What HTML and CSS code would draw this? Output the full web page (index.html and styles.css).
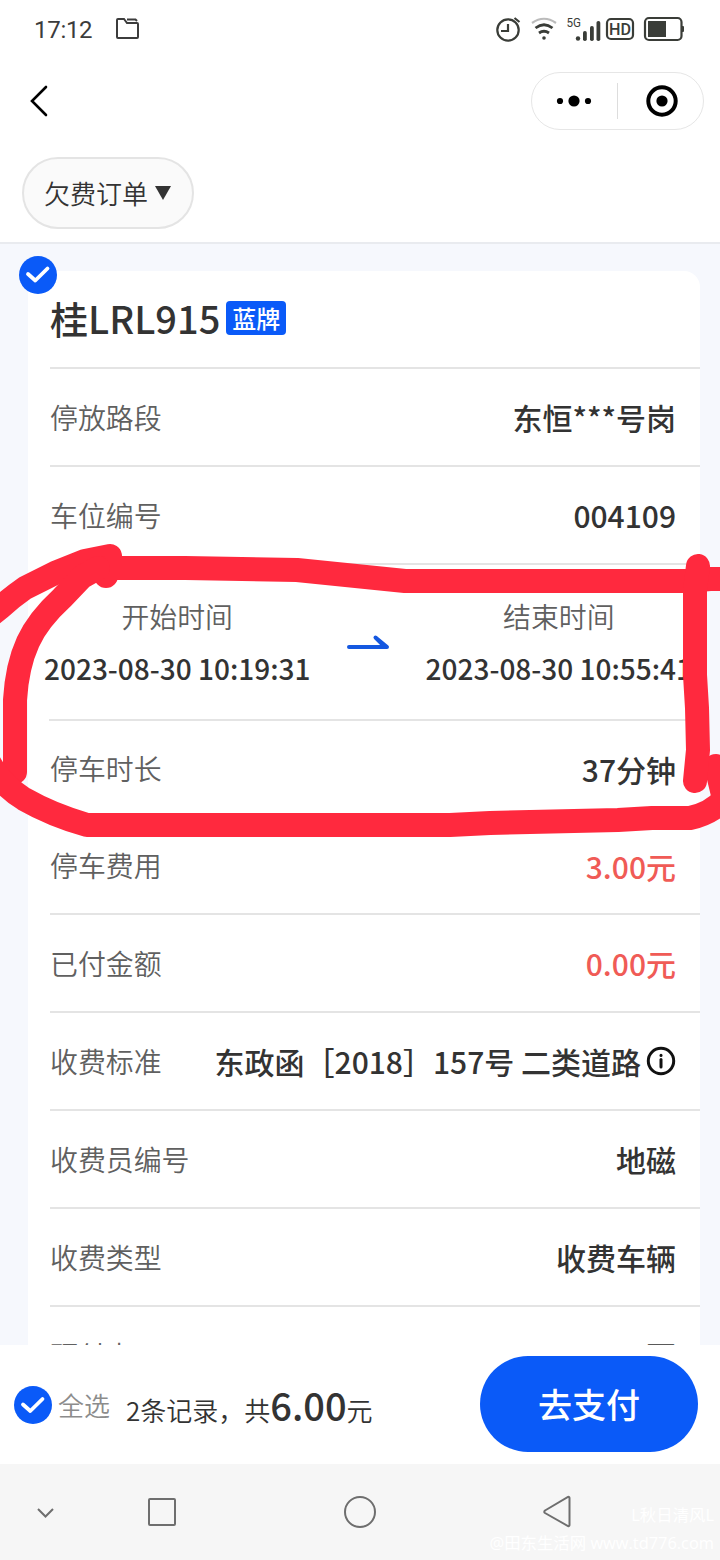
FILE: index.html
```html
<!DOCTYPE html>
<html lang="zh-CN">

<head>
    <meta charset="UTF-8">
    <meta name="viewport" content="width=device-width, initial-scale=1.0">
    <title>欠费订单</title>
    <link rel="stylesheet" href="styles.css">
</head>

<body>
    <div class="screen">
        <div class="status-bar">
            <span class="clock">17:12</span>
            <svg class="folder" width="26" height="24" viewBox="0 0 26 24">
                <path d="M2 20V3Q2 2 3 2H9L12 6H22Q23 6 23 7V20Q23 21 22 21H3Q2 21 2 20ZM12 2.500H20.500L22 4" />
            </svg>
            <svg class="status-icons" width="190" height="34" viewBox="495 12 190 34">
                <g fill="none" stroke="#3a3d38" stroke-width="2.200">
                    <circle cx="508" cy="30" r="10.700" />
                    <path d="M508 24V31H501M514.500 18L519.500 22" />
                    <path d="M532 23Q544 14.500 556 23" stroke="#bbb" />
                    <path d="M535.500 28Q544 21.500 552.500 28M539 33Q544 29.500 549 33" stroke-width="2.800" />
                    <rect x="607" y="19" width="26" height="20" rx="4" />
                    <rect x="645" y="18" width="36.500" height="22" rx="4" />
                </g>
                <g fill="#3a3d38">
                    <circle cx="544" cy="38" r="1.800" />
                    <circle cx="578" cy="38.500" r="2.200" />
                    <rect x="583" y="31" width="3.800" height="10" rx="1.800" />
                    <rect x="590" y="26" width="3.800" height="15" rx="1.800" />
                    <rect x="596.500" y="21" width="3.800" height="20" rx="1.800" />
                    <rect x="648" y="21" width="18" height="16" />
                    <rect x="681" y="26" width="3" height="6" rx="1" />
                    <text x="566.500" y="27" font-size="13" textLength="14.500" lengthAdjust="spacingAndGlyphs">5G</text>
                    <text x="609" y="35" font-size="17" font-weight="500" textLength="22" lengthAdjust="spacingAndGlyphs">HD</text>
                </g>
            </svg>
        </div>

        <div class="nav-bar">
            <svg width="20" height="32" viewBox="0 0 20 32">
                <path d="M17 2L3 16L17 30" />
            </svg>
            <div class="capsule">
                <svg width="36" height="14" viewBox="0 0 36 14">
                    <circle cx="4" cy="7" r="3.100" />
                    <circle cx="18" cy="7" r="5.600" />
                    <circle cx="32" cy="7" r="3.100" />
                </svg>
                <span class="divider"></span>
                <svg width="34" height="34" viewBox="0 0 34 34">
                    <circle cx="17" cy="17" r="13.700" fill="none" stroke="#000" stroke-width="4" />
                    <circle cx="17" cy="17" r="5.600" />
                </svg>
            </div>
        </div>

        <div class="filter-bar">
            <div class="filter"><span>欠费订单</span><span class="caret"></span></div>
        </div>

        <div class="content">
            <div class="card">
                <svg class="check card-check" viewBox="0 0 38 38">
                    <circle cx="19" cy="19" r="19" />
                    <path d="M9 18L16.300 24.500L28.500 12.500" />
                </svg>
                <div class="plate">
                    <span class="plate-no">桂LRL915</span><span class="tag">蓝牌</span>
                </div>
                <div class="row"><span class="label">停放路段</span><span class="value">东恒***号岗</span></div>
                <div class="row"><span class="label">车位编号</span><span class="value">004109</span></div>
                <div class="times">
                    <div class="time">
                        <span class="label">开始时间</span>
                        <span class="date">2023-08-30 10:19:31</span>
                    </div>
                    <svg class="arrow" width="44" height="16" viewBox="0 0 44 16">
                        <path d="M3 13H41L29.500 3.500L38 12" />
                    </svg>
                    <div class="time">
                        <span class="label">结束时间</span>
                        <span class="date">2023-08-30 10:55:41</span>
                    </div>
                </div>
                <div class="row short"><span class="label">停车时长</span><span class="value">37分钟</span></div>
                <div class="row short"><span class="label">停车费用</span><span class="value money">3.00元</span></div>
                <div class="row"><span class="label">已付金额</span><span class="value money">0.00元</span></div>
                <div class="row">
                    <span class="label">收费标准</span>
                    <span class="value standard">东政函［2018］157号 二类道路<svg class="info" width="30" height="30" viewBox="0 0 30 30">
                            <circle cx="15" cy="15" r="12.700" />
                            <path d="M15 13.500V21" />
                            <path d="M15 9.300V9.400" />
                        </svg></span>
                </div>
                <div class="row"><span class="label">收费员编号</span><span class="value">地磁</span></div>
                <div class="row"><span class="label">收费类型</span><span class="value">收费车辆</span></div>
                <div class="row"><span class="label">预付卡</span><span class="value">否</span></div>
            </div>
        </div>

        <div class="pay-bar">
            <svg class="check" viewBox="0 0 38 38">
                <circle cx="19" cy="19" r="19" />
                <path d="M9 18.500L16.300 25L28.500 13" />
            </svg>
            <span class="all">全选</span>
            <span class="total">2条记录，共<b>6.00</b>元</span>
            <button class="pay">去支付</button>
        </div>

        <div class="system-bar">
            <svg width="720" height="96" viewBox="0 0 720 96">
                <path d="M38 45L45.500 52.500L53 45" />
                <rect x="149" y="35" width="26" height="26" rx="1" />
                <circle cx="360" cy="48" r="15" />
                <path d="M545 46.500L568 33Q569.500 32.500 569.500 34V61Q569.500 62.500 568 62L545 49Q543.500 48 545 46.500Z" />
            </svg>
            <div class="watermark">
                <span class="author">L秋日清风L</span>
                <span>@田东生活网 www.td776.com</span>
            </div>
        </div>

        <!-- red marker drawn over the times -->
        <svg class="marker" width="720" height="320" viewBox="0 530 720 320">
            <path d="M-10 616L0 608Q12 597 25 588L55 573L85 561L110 556" />
            <path d="M106 576V568H185L297 570L405 581H688L710 579H730" />
            <path d="M98 568L82 577L62 598Q38 620 28 642Q17 666 15 700V772" />
            <path d="M-10 764Q2 785 24 799Q52 815 87 825H450L490 823L618 820L652 818H690Q712 813 724 799L716 766" />
            <path d="M698 566L695 590V675L697 708L698 750L695 781" />
        </svg>
    </div>
</body>

</html>
```
FILE: styles.css
```css
body {
    margin: 0;
    font-family: "Noto Sans CJK SC", sans-serif;
    color: #333;
    background-color: #fff;
}

.screen {
    position: relative;
    width: 720px;
    height: 1560px;
    overflow: hidden;
    display: flex;
    flex-direction: column;
}

.status-bar {
    height: 58px;
    flex: none;
    display: flex;
    align-items: center;
    padding: 0 35px 0 34px;
    box-sizing: border-box;
    font-family: Roboto, sans-serif;
}

.clock {
    font-size: 24px;
    letter-spacing: -0.3px;
    width: 81px;
    padding-top: 2px;
    color: #3c3c3c;
    white-space: nowrap;
}

.folder {
    fill: none;
    stroke: #3c3c3c;
    stroke-width: 2;
}

.status-icons {
    margin-left: auto;
}

.nav-bar {
    height: 86px;
    flex: none;
    display: flex;
    align-items: center;
    justify-content: space-between;
    padding: 0 16px 0 29px;
}

.nav-bar > svg {
    fill: none;
    stroke: #000;
    stroke-width: 2.6;
    stroke-linecap: round;
}

.capsule {
    width: 173px;
    height: 58px;
    box-sizing: border-box;
    border: 1px solid #e6e6e6;
    border-radius: 29px;
    display: flex;
    align-items: center;
    padding: 0 23px 0 24px;
}

.divider {
    width: 1px;
    height: 36px;
    background-color: #ddd;
    margin: 0 27px 0 25px;
}

.filter-bar {
    height: 98px;
    flex: none;
    box-sizing: border-box;
    padding: 13px 22px 0;
}

.filter {
    width: 172px;
    height: 72px;
    box-sizing: border-box;
    border: 2px solid #e4e4e4;
    border-radius: 36px;
    background-color: #fafafa;
    display: flex;
    align-items: center;
    justify-content: center;
    font-size: 26px;
    font-weight: 350;
}

.filter span:first-child {
    padding-bottom: 2px;
}

.caret {
    border: 8px solid transparent;
    border-top: 14px solid #333;
    border-bottom: 0;
    margin-left: 7px;
    margin-right: 1px;
}

.content {
    height: 1103px;
    flex: none;
    box-sizing: border-box;
    padding: 27px 20px 0 28px;
    background-color: #f6f8fd;
    border-top: 2px solid #e9ebef;
    overflow: hidden;
}

.card {
    position: relative;
    height: 1100px;
    padding-left: 22px;
    background-color: #fff;
    border-radius: 16px;
}

.check {
    width: 38px;
    height: 38px;
    flex: none;
    fill: #0a5af8;
}

.check path {
    fill: none;
    stroke: #fff;
    stroke-width: 3.8;
    stroke-linecap: round;
    stroke-linejoin: round;
}

.card-check {
    position: absolute;
    left: -9px;
    top: -15px;
}

.plate {
    height: 98px;
    box-sizing: border-box;
    padding-bottom: 2px;
    border-bottom: 2px solid #e4e4e4;
    display: flex;
    align-items: center;
}

.plate-no {
    font-size: 38px;
    font-weight: 500;
    padding-bottom: 1px;
}

.tag {
    width: 60px;
    height: 34px;
    line-height: 33px;
    margin-left: 6px;
    border-radius: 4px;
    background-color: #0a5af8;
    color: #fff;
    text-align: center;
    font-size: 24px;
    font-weight: 500;
}

.row {
    height: 98px;
    box-sizing: border-box;
    border-bottom: 2px solid #e4e4e4;
    display: flex;
    align-items: center;
    justify-content: space-between;
    padding-right: 24px;
    white-space: nowrap;
}

.short {
    height: 97px;
}

.label {
    font-size: 27.9px;
    font-weight: 350;
    color: #606060;
}

.row .label {
    padding-bottom: 1px;
}

.value {
    font-size: 30px;
    font-weight: 500;
}

.money {
    color: #f05b56;
}

.standard {
    display: flex;
    align-items: center;
}

.info {
    margin: 0 0 0 5px;
    fill: none;
    stroke: #111;
    stroke-width: 3;
    stroke-linecap: round;
}

.times {
    height: 156px;
    box-sizing: border-box;
    border-bottom: 2px solid #e4e4e4;
    display: flex;
    justify-content: space-between;
    padding-top: 30px;
    margin-left: -6px;
    padding-right: 8px;
    border-image: linear-gradient(90deg, transparent 6px, #e4e4e4 6px) 1;
}

.time {
    display: flex;
    flex-direction: column;
    align-items: center;
    white-space: nowrap;
}

.time .label {
    line-height: 42px;
}

.date {
    font-size: 28px;
    font-weight: 500;
    line-height: 62px;
}

.arrow {
    margin-top: 39px;
    fill: none;
    stroke: #1558e0;
    stroke-width: 4;
    stroke-linecap: round;
    stroke-linejoin: round;
}

.pay-bar {
    height: 119px;
    flex: none;
    display: flex;
    align-items: center;
    padding: 0 22px 0 14px;
    background-color: #fff;
}

.all {
    margin-left: 6px;
    font-size: 26px;
    font-weight: 350;
    color: #8c8c8c;
}

.total {
    margin-left: 16px;
    font-size: 26px;
    font-weight: 350;
    white-space: nowrap;
}

.total b {
    font-size: 38px;
    font-weight: 500;
}

.pay {
    width: 218px;
    height: 96px;
    margin-left: auto;
    margin-bottom: 2px;
    border: none;
    border-radius: 48px;
    background-color: #0a5af8;
    color: #fff;
    font-family: inherit;
    font-size: 34px;
    font-weight: 500;
}

.system-bar {
    position: relative;
    height: 96px;
    flex: none;
    background-color: #f6f6f6;
}

.system-bar svg {
    display: block;
    fill: none;
    stroke: #6e6e6e;
    stroke-width: 2;
}

.watermark {
    position: absolute;
    right: 6px;
    bottom: 3px;
    display: flex;
    flex-direction: column;
    align-items: flex-end;
    font-family: "Open Sans", "Noto Sans CJK SC", sans-serif;
    font-size: 16.4px;
    line-height: 28px;
    color: #fff;
}

.marker {
    position: absolute;
    left: 0;
    top: 530px;
    fill: none;
    stroke: #ff293e;
    stroke-width: 24;
    stroke-linecap: round;
    stroke-linejoin: round;
}
```
